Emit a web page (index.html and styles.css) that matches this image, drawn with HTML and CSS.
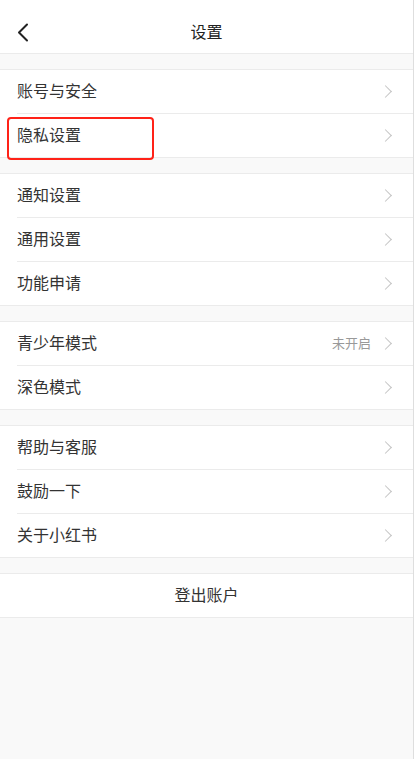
FILE: index.html
```html
<!DOCTYPE html>
<html lang="zh-CN">
<head>
    <meta charset="UTF-8">
    <meta name="viewport" content="width=device-width, initial-scale=1.0">
    <title>设置</title>
    <link rel="stylesheet" href="styles.css">
</head>
<body>
    <div class="page">
        <div class="header">
            <span class="back">
                <svg width="12" height="19" viewBox="0 0 12 19"><path d="M10 1.5 L2 9.5 L10 17.5" fill="none" stroke="#222" stroke-width="2" stroke-linecap="round" stroke-linejoin="round"/></svg>
            </span>
            <span class="title">设置</span>
        </div>

        <div class="group">
            <div class="row"><span class="label">账号与安全</span><span class="chev"></span></div>
            <div class="row highlight"><span class="label">隐私设置</span><span class="chev"></span></div>
        </div>

        <div class="group">
            <div class="row"><span class="label">通知设置</span><span class="chev"></span></div>
            <div class="row"><span class="label">通用设置</span><span class="chev"></span></div>
            <div class="row"><span class="label">功能申请</span><span class="chev"></span></div>
        </div>

        <div class="group">
            <div class="row"><span class="label">青少年模式</span><span class="value">未开启</span><span class="chev"></span></div>
            <div class="row"><span class="label">深色模式</span><span class="chev"></span></div>
        </div>

        <div class="group">
            <div class="row"><span class="label">帮助与客服</span><span class="chev"></span></div>
            <div class="row"><span class="label">鼓励一下</span><span class="chev"></span></div>
            <div class="row"><span class="label">关于小红书</span><span class="chev"></span></div>
        </div>

        <div class="group">
            <div class="logout"><span class="logout-text">登出账户</span></div>
        </div>
    </div>
</body>
</html>
```

FILE: styles.css
```css
body {
    margin: 0;
    padding: 0;
    font-family: "Noto Sans CJK SC", "Liberation Sans", sans-serif;
    background: #f9f9f9;
}

.page {
    min-height: 759px;
    border-right: 1px solid #dedede;
    box-sizing: border-box;
}

.header {
    height: 54px;
    background: #fff;
    border-bottom: 1px solid #ebebeb;
    box-sizing: border-box;
    display: flex;
    align-items: center;
    justify-content: center;
    position: relative;
}

.back {
    position: absolute;
    left: 17px;
    top: 23px;
    display: flex;
}

.title {
    font-size: 16px;
    color: #222;
    line-height: 20px;
    margin-top: 8px;
}

.group {
    margin-top: 15px;
    background: #fff;
    border-top: 1px solid #ebebeb;
    border-bottom: 1px solid #ebebeb;
}

.row {
    height: 44px;
    margin-left: 17px;
    padding-right: 21px;
    display: flex;
    align-items: center;
    border-bottom: 1px solid #ebebeb;
    box-sizing: border-box;
    position: relative;
}

.row:last-child {
    border-bottom: none;
    height: 43px;
}

.label {
    flex: 1;
    font-size: 16px;
    line-height: 20px;
    color: #333;
    margin-bottom: 3px;
}

.value {
    font-size: 13px;
    line-height: 16px;
    color: #999;
    margin-right: 10px;
    margin-bottom: 2px;
}

.chev {
    width: 8px;
    height: 8px;
    border-top: 1.5px solid #c4c4c4;
    border-right: 1.5px solid #c4c4c4;
    transform: rotate(45deg);
    margin-right: 2px;
}

.highlight::after {
    content: "";
    position: absolute;
    left: -10px;
    top: 3px;
    width: 147px;
    height: 43px;
    border: 2.5px solid #ff2218;
    border-radius: 4px;
    box-sizing: border-box;
}

.logout {
    height: 43px;
    display: flex;
    align-items: center;
    justify-content: center;
}

.logout-text {
    font-size: 16px;
    line-height: 20px;
    color: #333;
    margin-bottom: 3px;
}
```
